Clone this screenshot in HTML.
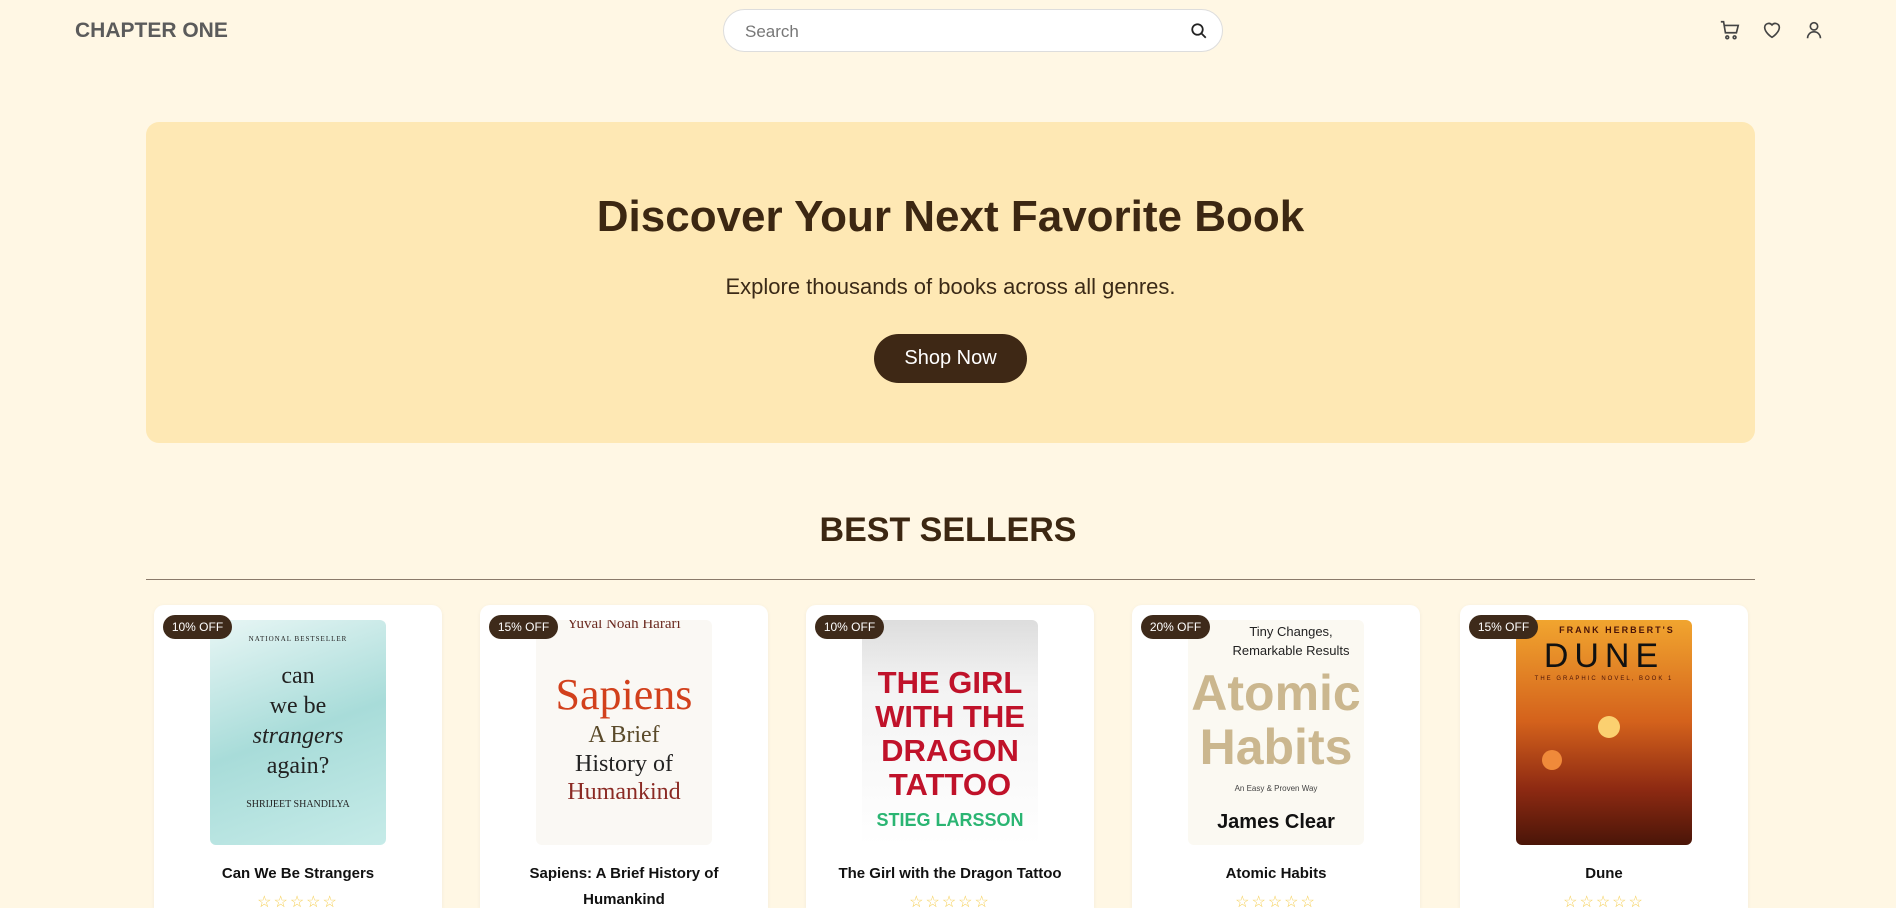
<!DOCTYPE html>
<html style="width:1896px;height:908px;overflow:hidden"><head><meta charset="utf-8"><style>
*{box-sizing:border-box;margin:0;padding:0}
body{width:1896px;height:908px;overflow:hidden;background:#fff7e4;font-family:"Liberation Sans",sans-serif;position:relative}
.logo{position:absolute;left:75px;top:19px;font-size:21px;font-weight:bold;color:#5b5b5b;letter-spacing:0}
.search{position:absolute;left:723px;top:9px;width:500px;height:43px;background:#fff;border:1px solid #ddd;border-radius:22px}
.search span{position:absolute;left:21px;top:12px;font-size:17px;color:#777}
.search svg{position:absolute;right:14px;top:12px}
.icons svg{position:absolute;top:19px}
.hero{position:absolute;left:146px;top:122px;width:1609px;height:321px;background:#fee8b4;border-radius:13px;text-align:center;color:#3c2712}
.hero h1{position:absolute;top:70px;width:100%;font-size:44px;font-weight:bold}
.hero p{position:absolute;top:152px;width:100%;font-size:22px;color:#3b2a17}
.btn{position:absolute;left:728px;top:212px;width:153px;height:49px;background:#3e2815;color:#fff;border-radius:25px;font-size:20px;line-height:49px}
.bs{position:absolute;top:511px;width:100%;text-align:center;font-size:34px;color:#3c2712;font-weight:bold;letter-spacing:0}
.line{position:absolute;left:146px;top:579px;width:1609px;height:1px;background:#8a7a6a}
.card{position:absolute;top:605px;width:288px;height:303px;background:#fff;border-radius:10px 10px 0 0;box-shadow:0 1px 4px rgba(0,0,0,.05);overflow:hidden}
.cover{position:absolute;left:56px;top:15px;width:176px;height:225px;border-radius:6px;overflow:hidden;text-align:center}
.badge{position:absolute;left:9px;top:10px;width:69px;height:24px;background:#3e2a1a;color:#fff;border-radius:12px;font-size:12px;line-height:24px;text-align:center;z-index:2}
.title{position:absolute;top:256px;width:100%;text-align:center;font-size:15px;font-weight:bold;color:#111;line-height:26px;padding:0 30px}
.stars{position:absolute;top:287px;width:100%;text-align:center;color:#f5cf55;font-size:16px;letter-spacing:2px}
</style></head><body>
<div class="logo">CHAPTER ONE</div>
<div class="search"><span>Search</span>
<svg width="18" height="18" viewBox="0 0 24 24" fill="none" stroke="#222" stroke-width="2.4"><circle cx="10" cy="10" r="7"/><path d="M15 15l6 6"/></svg></div>
<div class="icons">
<svg style="left:1719px" width="22" height="22" viewBox="0 0 24 24" fill="none" stroke="#444" stroke-width="1.8"><path d="M2 3h3l2 12h12l2-8H6"/><circle cx="9" cy="20" r="1.5"/><circle cx="17" cy="20" r="1.5"/></svg>
<svg style="left:1761px" width="22" height="22" viewBox="0 0 24 24" fill="none" stroke="#444" stroke-width="1.8"><path d="M12 20s-8-5-8-11a4.5 4.5 0 0 1 8-2.5A4.5 4.5 0 0 1 20 9c0 6-8 11-8 11z"/></svg>
<svg style="left:1803px" width="22" height="22" viewBox="0 0 24 24" fill="none" stroke="#444" stroke-width="1.8"><circle cx="12" cy="8" r="4"/><path d="M5 21c0-4 3-7 7-7s7 3 7 7"/></svg>
</div>
<div class="hero"><h1>Discover Your Next Favorite Book</h1><p>Explore thousands of books across all genres.</p><div class="btn">Shop Now</div></div>
<div class="bs">BEST SELLERS</div><div class="line"></div>

<div class="card" style="left:154px"><div class="badge">10% OFF</div>
<div class="cover" style="background:linear-gradient(160deg,#e8f6f5,#a8dcd9 50%,#c6ebe8);font-family:'Liberation Serif',serif;color:#222"><div style="font-size:7px;margin-top:15px;letter-spacing:1px">NATIONAL BESTSELLER</div><div style="font-size:24px;margin-top:18px;line-height:30px">can<br>we be<br><i>strangers</i><br>again?</div><div style="font-size:10px;margin-top:18px">SHRIJEET SHANDILYA</div></div>
<div class="title">Can We Be Strangers</div><div class="stars">☆☆☆☆☆</div></div>

<div class="card" style="left:480px"><div class="badge">15% OFF</div>
<div class="cover" style="background:#faf8f4;font-family:'Liberation Serif',serif"><div style="font-size:15px;color:#6b2a20;margin-top:-4px">Yuval Noah Harari</div><div style="font-size:44px;color:#d2401c;margin-top:36px">Sapiens</div><div style="font-size:24px;color:#5a4a2a;line-height:30px">A Brief</div><div style="font-size:24px;color:#222;line-height:28px">History of</div><div style="font-size:24px;color:#8b2a24;line-height:28px">Humankind</div></div>
<div class="title">Sapiens: A Brief History of Humankind</div><div class="stars" style="top:313px">☆☆☆☆☆</div></div>

<div class="card" style="left:806px"><div class="badge">10% OFF</div>
<div class="cover" style="background:linear-gradient(#ddd,#f3f3f3 30%,#fff);font-weight:bold"><div style="font-size:31px;color:#c0122a;margin-top:46px;line-height:34px">THE GIRL<br>WITH THE<br>DRAGON<br>TATTOO</div><div style="font-size:18px;color:#2bb573;margin-top:8px">STIEG LARSSON</div></div>
<div class="title" style="padding:0 10px">The Girl with the Dragon Tattoo</div><div class="stars">☆☆☆☆☆</div></div>

<div class="card" style="left:1132px"><div class="badge">20% OFF</div>
<div class="cover" style="background:#fbf9f2"><div style="font-size:13px;color:#222;margin-top:2px;line-height:19px;padding-left:30px">Tiny Changes,<br>Remarkable Results</div><div style="font-size:50px;color:#cbb78f;font-weight:bold;line-height:54px;margin-top:6px">Atomic<br>Habits</div><div style="font-size:8px;color:#444;margin-top:10px">An Easy &amp; Proven Way</div><div style="font-size:20px;color:#111;font-weight:bold;margin-top:18px">James Clear</div></div>
<div class="title">Atomic Habits</div><div class="stars">☆☆☆☆☆</div></div>

<div class="card" style="left:1460px"><div class="badge">15% OFF</div>
<div class="cover" style="background:linear-gradient(#f1a52f,#d4621c 45%,#8e2a12 75%,#4a1508)"><div style="font-size:9px;color:#4a1408;font-weight:bold;letter-spacing:2px;margin-top:5px;padding-left:26px">FRANK HERBERT'S</div><div style="font-size:34px;color:#111;letter-spacing:6px;margin-top:2px">DUNE</div><div style="font-size:6px;color:#4a1408;letter-spacing:2px">THE GRAPHIC NOVEL, BOOK 1</div><div style="position:absolute;left:82px;top:96px;width:22px;height:22px;border-radius:50%;background:#fbd070"></div><div style="position:absolute;left:26px;top:130px;width:20px;height:20px;border-radius:50%;background:#f08a3a"></div></div>
<div class="title">Dune</div><div class="stars">☆☆☆☆☆</div></div>
</body></html>
